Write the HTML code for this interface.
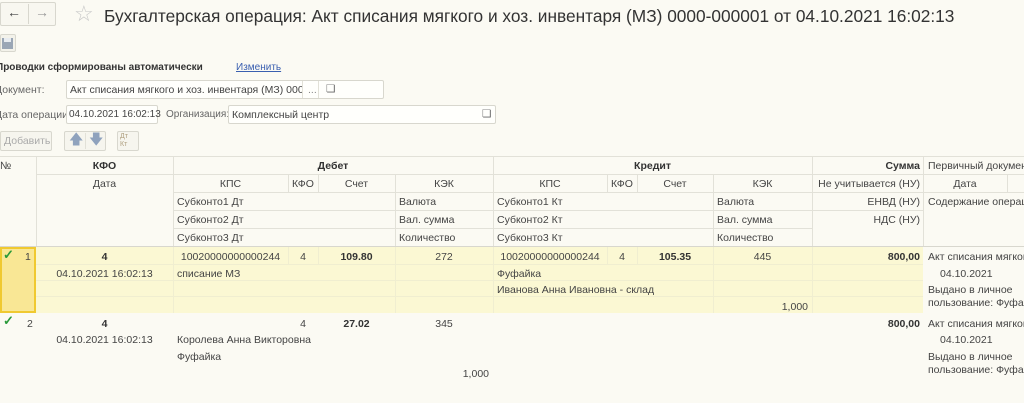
<!DOCTYPE html>
<html><head><meta charset="utf-8"><style>
body{margin:0;width:1024px;height:403px;overflow:hidden;background:#fbfaf3;font-family:"Liberation Sans",sans-serif;color:#444;position:relative}
div{position:absolute;box-sizing:border-box}
.t{font-size:10.5px;white-space:nowrap;line-height:12px}
.c{text-align:center}
.r{text-align:right}
.b{font-weight:bold;color:#333}
.hl{height:1px;background:#e2e1d8}
.vl{width:1px;background:#e2e1d8}
.box{border:1px solid #d8d7ce;background:#fffffc;border-radius:2px}
</style></head><body>
<div class="box" style="left:0;top:2px;width:56px;height:24px;background:#f8f7f0"></div>
<div class="vl" style="left:28px;top:4px;height:20px;background:#d8d7ce"></div>
<div class="t" style="left:7px;top:6px;font-size:14px;color:#444">&#8592;</div>
<div class="t" style="left:35px;top:6px;font-size:14px;color:#999">&#8594;</div>
<div class="t" style="left:74px;top:1px;font-size:22px;color:#c8c8c8;line-height:26px">&#9734;</div>
<div class="t" style="left:104px;top:5px;font-size:17.3px;line-height:22px;color:#333">Бухгалтерская операция: Акт списания мягкого и хоз. инвентаря (МЗ) 0000-000001 от 04.10.2021 16:02:13</div>
<div class="box" style="left:0;top:34px;width:16px;height:18px;background:#f3f2ea"></div>
<div style="left:2px;top:38px;width:11px;height:11px;background:#9aa6b5"></div>
<div style="left:4px;top:38px;width:7px;height:4px;background:#e8ecf0"></div>
<div class="t b" style="left:-4px;top:62px;font-size:10px">Проводки сформированы автоматически</div>
<div class="t" style="left:236px;top:62px;color:#3a5fb0;text-decoration:underline;font-size:10px">Изменить</div>
<div class="t" style="left:-5px;top:84px;color:#666">Документ:</div>
<div class="box" style="left:66px;top:80px;width:318px;height:19px"></div>
<div class="t" style="left:70px;top:84px;width:232px;overflow:hidden">Акт списания мягкого и хоз. инвентаря (МЗ) 0000-000001</div>
<div class="vl" style="left:302px;top:81px;height:17px"></div>
<div class="t" style="left:308px;top:84px;color:#888">...</div>
<div class="vl" style="left:318px;top:81px;height:17px"></div>
<div class="t" style="left:326px;top:83px;color:#666">&#10063;</div>
<div class="t" style="left:-5px;top:109px;color:#666">Дата операции:</div>
<div class="box" style="left:66px;top:105px;width:92px;height:19px"></div>
<div class="t" style="left:69px;top:109px;font-size:10px">04.10.2021 16:02:13</div>
<div class="t" style="left:166px;top:109px;color:#666;font-size:10px">Организация:</div>
<div class="box" style="left:228px;top:105px;width:268px;height:19px"></div>
<div class="t" style="left:232px;top:109px">Комплексный центр</div>
<div class="t" style="left:482px;top:108px;color:#666">&#10063;</div>
<div class="box" style="left:0;top:131px;width:52px;height:20px;background:#f6f5ee"></div>
<div class="t" style="left:4px;top:135px;color:#aaa">Добавить</div>
<div class="box" style="left:64px;top:131px;width:42px;height:20px;background:#f6f5ee"></div>
<div class="vl" style="left:85px;top:133px;height:16px"></div>
<div class="t" style="left:69px;top:133px;color:#8fa2bd;font-size:14px">&#129093;</div>
<div class="t" style="left:89px;top:133px;color:#8fa2bd;font-size:14px">&#129095;</div>
<div class="box" style="left:117px;top:131px;width:22px;height:20px;background:#f6f5ee"></div>
<div class="t" style="left:120px;top:133px;font-size:7px;line-height:8px;color:#b0a080">Дт<br>Кт</div>

<div class="hl" style="left:0;top:156px;width:1024px"></div>
<div class="hl" style="left:36px;top:174px;width:988px"></div>
<div class="hl" style="left:173px;top:192px;width:851px"></div>
<div class="hl" style="left:173px;top:210px;width:751px"></div>
<div class="hl" style="left:173px;top:228px;width:639px"></div>
<div class="hl" style="left:0;top:246px;width:1024px;background:#d8d7ce"></div>
<div class="vl" style="left:36px;top:156px;height:90px"></div>
<div class="vl" style="left:173px;top:156px;height:90px"></div>
<div class="vl" style="left:493px;top:156px;height:90px"></div>
<div class="vl" style="left:812px;top:156px;height:90px"></div>
<div class="vl" style="left:923px;top:156px;height:90px"></div>
<div class="vl" style="left:288px;top:174px;height:18px"></div>
<div class="vl" style="left:318px;top:174px;height:18px"></div>
<div class="vl" style="left:395px;top:174px;height:72px"></div>
<div class="vl" style="left:607px;top:174px;height:18px"></div>
<div class="vl" style="left:637px;top:174px;height:18px"></div>
<div class="vl" style="left:713px;top:174px;height:72px"></div>
<div class="vl" style="left:1007px;top:174px;height:18px"></div>

<div class="t" style="left:0;top:160px">№</div>
<div class="t c b" style="left:36px;top:160px;width:137px">КФО</div>
<div class="t c b" style="left:173px;top:160px;width:320px">Дебет</div>
<div class="t c b" style="left:493px;top:160px;width:319px">Кредит</div>
<div class="t r b" style="left:812px;top:160px;width:108px">Сумма</div>
<div class="t" style="left:928px;top:160px">Первичный документ</div>
<div class="t c" style="left:36px;top:178px;width:137px">Дата</div>
<div class="t c" style="left:173px;top:178px;width:115px">КПС</div>
<div class="t c" style="left:288px;top:178px;width:30px">КФО</div>
<div class="t c" style="left:318px;top:178px;width:77px">Счет</div>
<div class="t c" style="left:395px;top:178px;width:98px">КЭК</div>
<div class="t c" style="left:493px;top:178px;width:114px">КПС</div>
<div class="t c" style="left:607px;top:178px;width:30px">КФО</div>
<div class="t c" style="left:637px;top:178px;width:76px">Счет</div>
<div class="t c" style="left:713px;top:178px;width:99px">КЭК</div>
<div class="t r" style="left:812px;top:178px;width:108px">Не учитывается (НУ)</div>
<div class="t c" style="left:923px;top:178px;width:84px">Дата</div>
<div class="t" style="left:177px;top:196px">Субконто1 Дт</div>
<div class="t" style="left:399px;top:196px">Валюта</div>
<div class="t" style="left:497px;top:196px">Субконто1 Кт</div>
<div class="t" style="left:717px;top:196px">Валюта</div>
<div class="t r" style="left:812px;top:196px;width:108px">ЕНВД (НУ)</div>
<div class="t" style="left:928px;top:196px">Содержание операции</div>
<div class="t" style="left:177px;top:214px">Субконто2 Дт</div>
<div class="t" style="left:399px;top:214px">Вал. сумма</div>
<div class="t" style="left:497px;top:214px">Субконто2 Кт</div>
<div class="t" style="left:717px;top:214px">Вал. сумма</div>
<div class="t r" style="left:812px;top:214px;width:108px">НДС (НУ)</div>
<div class="t" style="left:177px;top:232px">Субконто3 Дт</div>
<div class="t" style="left:399px;top:232px">Количество</div>
<div class="t" style="left:497px;top:232px">Субконто3 Кт</div>
<div class="t" style="left:717px;top:232px">Количество</div>

<div style="left:36px;top:247px;width:887px;height:66px;background:#fbf8d3"></div>
<div style="left:0;top:247px;width:36px;height:66px;background:#f9e795;border:2px solid #f0c930"></div>
<div class="hl" style="left:36px;top:264px;width:887px;background:#f0eed0"></div>
<div class="hl" style="left:36px;top:280px;width:887px;background:#f0eed0"></div>
<div class="hl" style="left:36px;top:296px;width:887px;background:#f0eed0"></div>
<div class="vl" style="left:173px;top:247px;height:66px;background:#f0eed0"></div>
<div class="vl" style="left:288px;top:247px;height:17px;background:#f0eed0"></div>
<div class="vl" style="left:318px;top:247px;height:17px;background:#f0eed0"></div>
<div class="vl" style="left:395px;top:247px;height:66px;background:#f0eed0"></div>
<div class="vl" style="left:493px;top:247px;height:66px;background:#f0eed0"></div>
<div class="vl" style="left:607px;top:247px;height:17px;background:#f0eed0"></div>
<div class="vl" style="left:637px;top:247px;height:17px;background:#f0eed0"></div>
<div class="vl" style="left:713px;top:247px;height:66px;background:#f0eed0"></div>
<div class="vl" style="left:812px;top:247px;height:66px;background:#f0eed0"></div>
<div class="t" style="left:3px;top:249px;color:#2a9a3a;font-size:13px;font-weight:bold">&#10003;</div>
<div class="t" style="left:25px;top:251px">1</div>
<div class="t c b" style="left:36px;top:251px;width:137px">4</div>
<div class="t c" style="left:173px;top:251px;width:115px">10020000000000244</div>
<div class="t c" style="left:288px;top:251px;width:30px">4</div>
<div class="t c b" style="left:318px;top:251px;width:77px">109.80</div>
<div class="t c" style="left:395px;top:251px;width:98px">272</div>
<div class="t c" style="left:493px;top:251px;width:114px">10020000000000244</div>
<div class="t c" style="left:607px;top:251px;width:30px">4</div>
<div class="t c b" style="left:637px;top:251px;width:76px">105.35</div>
<div class="t c" style="left:713px;top:251px;width:99px">445</div>
<div class="t r b" style="left:812px;top:251px;width:108px">800,00</div>
<div class="t" style="left:928px;top:251px">Акт списания мягкого</div>
<div class="t c" style="left:36px;top:268px;width:137px">04.10.2021 16:02:13</div>
<div class="t" style="left:177px;top:268px">списание МЗ</div>
<div class="t" style="left:497px;top:268px">Фуфайка</div>
<div class="t" style="left:940px;top:268px">04.10.2021</div>
<div class="t" style="left:497px;top:284px">Иванова Анна Ивановна - склад</div>
<div class="t" style="left:928px;top:284px">Выдано в личное</div>
<div class="t" style="left:928px;top:297px">пользование: Фуфайка</div>
<div class="t r" style="left:713px;top:301px;width:95px">1,000</div>

<div class="t" style="left:3px;top:315px;color:#2a9a3a;font-size:13px;font-weight:bold">&#10003;</div>
<div class="t" style="left:27px;top:318px">2</div>
<div class="t c b" style="left:36px;top:318px;width:137px">4</div>
<div class="t c" style="left:288px;top:318px;width:30px">4</div>
<div class="t c b" style="left:318px;top:318px;width:77px">27.02</div>
<div class="t c" style="left:395px;top:318px;width:98px">345</div>
<div class="t r b" style="left:812px;top:318px;width:108px">800,00</div>
<div class="t" style="left:928px;top:318px">Акт списания мягкого</div>
<div class="t c" style="left:36px;top:334px;width:137px">04.10.2021 16:02:13</div>
<div class="t" style="left:177px;top:334px">Королева Анна Викторовна</div>
<div class="t" style="left:940px;top:334px">04.10.2021</div>
<div class="t" style="left:177px;top:351px">Фуфайка</div>
<div class="t" style="left:928px;top:351px">Выдано в личное</div>
<div class="t" style="left:928px;top:364px">пользование: Фуфайка</div>
<div class="t r" style="left:395px;top:368px;width:94px">1,000</div>
</body></html>
